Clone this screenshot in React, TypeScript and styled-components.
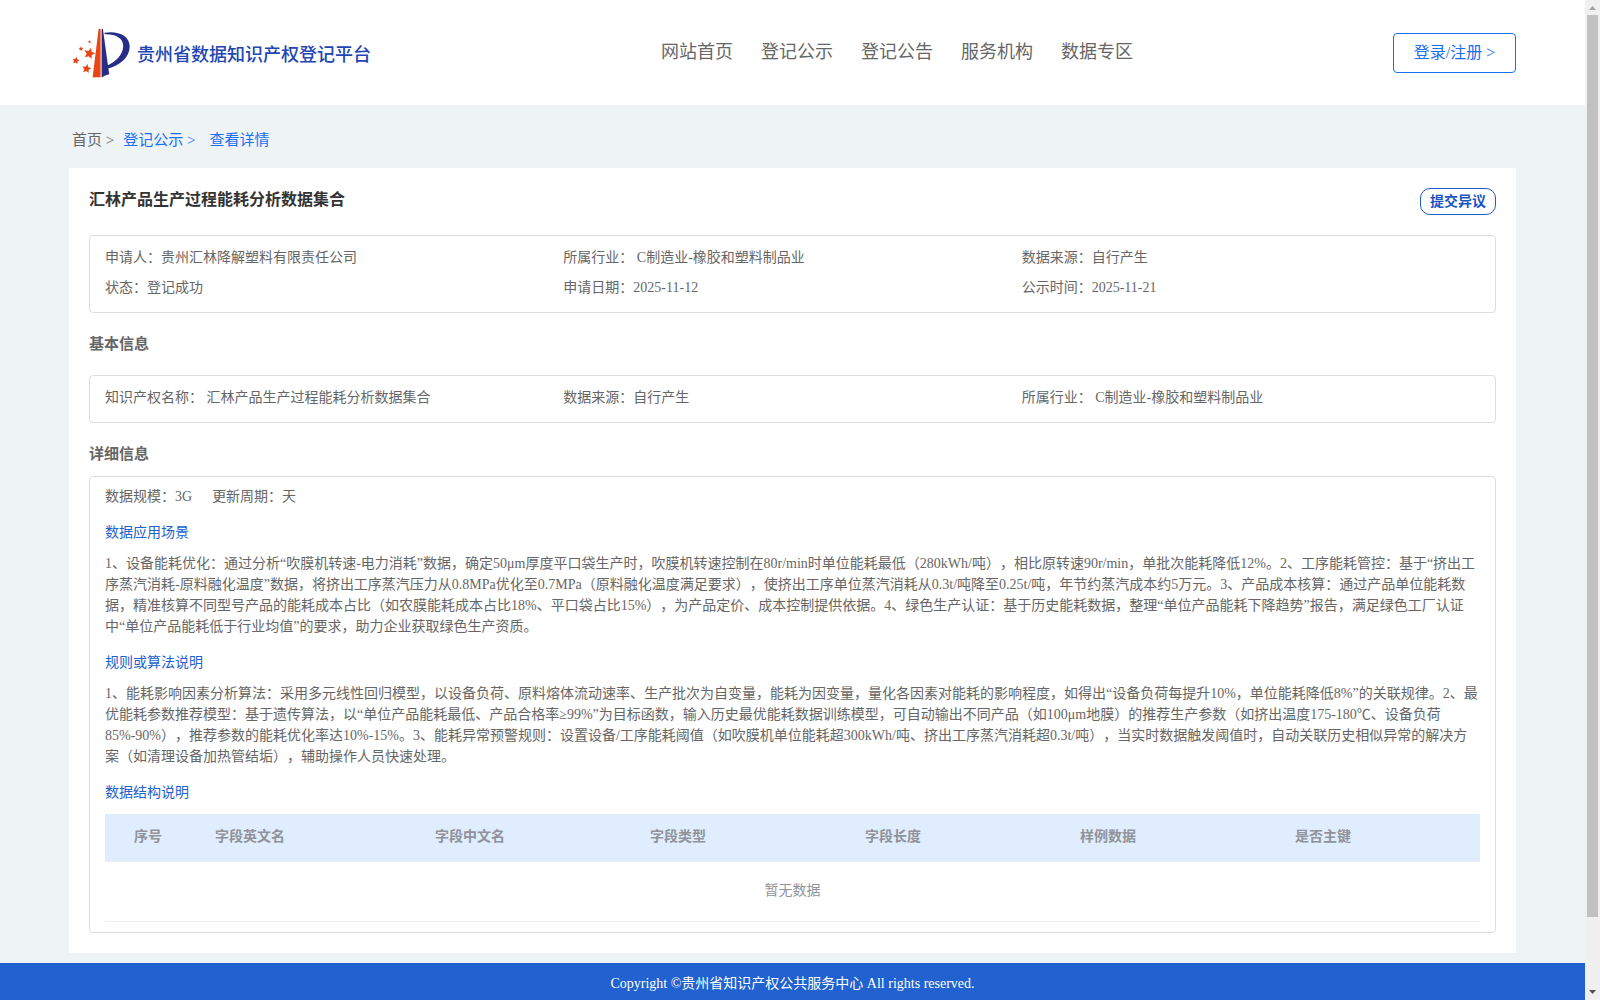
import React from "react";
import styled, { createGlobalStyle } from "styled-components";

const GlobalStyle = createGlobalStyle`
  * { box-sizing: border-box; }
  body {
    margin: 0;
    background: #eef3f6;
    font-family: "Liberation Serif", "Noto Sans CJK SC", serif;
    font-size: 14px;
    color: #666;
    text-spacing-trim: space-all;
  }
`;

const Window = styled.div`
  display: flex;
  width: 1600px;
  height: 1000px;
  overflow: hidden;
`;

const Page = styled.div`
  display: flex;
  flex-direction: column;
  width: 1585px;
  height: 1000px;
  background: #eef3f6;
`;

const Header = styled.header`
  display: flex;
  align-items: flex-start;
  height: 105px;
  padding: 0 69px;
  background: #fff;
`;

const Brand = styled.div`
  display: flex;
  align-items: center;
  width: 592px;
  height: 107px;
`;

const BrandName = styled.span`
  margin-left: 4px;
  padding-top: 2px;
  color: #2146b4;
  font-size: 18px;
  font-weight: 500;
  line-height: 24px;
  white-space: nowrap;
`;

const Nav = styled.nav`
  display: flex;
  gap: 28px;
  margin-top: 40px;
`;

const NavItem = styled.a`
  color: #666;
  font-size: 18px;
  line-height: 24px;
  white-space: nowrap;
`;

const LoginButton = styled.button`
  width: 123px;
  height: 40px;
  margin: 33px 0 0 auto;
  padding: 0;
  border: 1px solid #1a6ff0;
  border-radius: 4px;
  background: #fff;
  color: #1a6ff0;
  font-family: inherit;
  font-size: 16px;
  line-height: 36px;
  white-space: nowrap;
`;

const Breadcrumb = styled.div`
  display: flex;
  height: 63px;
  padding: 24px 0 0 72px;
  font-size: 15px;
  line-height: 22px;
`;

const Crumb = styled.span<{ $active?: boolean; $gap?: number }>`
  margin-right: ${(p) => p.$gap ?? 0}px;
  color: ${(p) => (p.$active ? "#1a6ff5" : "#666")};
  white-space: pre;
`;

const Card = styled.main`
  display: flex;
  flex-direction: column;
  width: 1447px;
  height: 785px;
  margin-left: 69px;
  padding: 20px;
  background: #fff;
`;

const TitleRow = styled.div`
  display: flex;
  justify-content: space-between;
  height: 47px;
`;

const Title = styled.h1`
  margin: 0;
  padding-top: 1px;
  color: #333;
  font-size: 16px;
  font-weight: 700;
  line-height: 22px;
`;

const ObjectionButton = styled.button`
  width: 76px;
  height: 27px;
  padding: 0;
  border: 1px solid #1f5cc8;
  border-radius: 10px;
  background: #fff;
  color: #1a55c4;
  font-family: inherit;
  font-size: 14px;
  font-weight: 700;
  line-height: 23px;
`;

const Box = styled.section<{ $height: number; $top?: number }>`
  height: ${(p) => p.$height}px;
  padding: ${(p) => p.$top ?? 7}px 15px 0;
  border: 1px solid #ddd;
  border-radius: 4px;
`;

const InfoGrid = styled.div`
  display: grid;
  grid-template-columns: repeat(3, 1fr);
  line-height: 30px;
`;

const Cell = styled.div`
  white-space: pre;
`;

const SectionTitle = styled.h2<{ $height: number; $top: number }>`
  height: ${(p) => p.$height}px;
  margin: 0;
  padding-top: ${(p) => p.$top}px;
  color: #666;
  font-size: 15px;
  font-weight: 700;
  line-height: 20px;
`;

const Meta = styled.div`
  display: flex;
  gap: 20px;
  height: 20px;
  line-height: 20px;
`;

const SubTitle = styled.h3<{ $gap?: number }>`
  margin: 16px 0 ${(p) => p.$gap ?? 10}px;
  color: #2161d0;
  font-size: 14px;
  font-weight: 400;
  line-height: 20px;
`;

const Paragraph = styled.p`
  margin: 0;
  line-height: 21px;
`;

const Line = styled.span`
  display: block;
  white-space: nowrap;
`;

const TableHead = styled.div`
  display: grid;
  grid-template-columns: 81px 220px repeat(4, 215px) 185px;
  width: 1375px;
  height: 48px;
  padding-left: 29px;
  border-bottom: 1px solid #ebeef5;
  background: #e0edfe;
  color: #909399;
  font-weight: 700;
  line-height: 45px;
`;

const Empty = styled.div`
  height: 60px;
  width: 1375px;
  border-bottom: 1px solid #ebeef0;
  color: #909399;
  line-height: 57px;
  text-align: center;
`;

const Footer = styled.footer`
  height: 37px;
  margin-top: 10px;
  background: #2161d0;
  color: #fff;
  line-height: 42px;
  text-align: center;
`;

const ScrollTrack = styled.div`
  display: flex;
  flex-direction: column;
  align-items: center;
  width: 15px;
  height: 1000px;
  background: #f0f0f0;
`;

const ScrollThumb = styled.div`
  width: 11px;
  height: 902px;
  background: #c1c1c1;
`;

const ScrollArrow = styled.svg<{ $bottom?: boolean }>`
  display: block;
  margin-top: ${(p) => (p.$bottom ? "auto" : "0")};
`;

const navItems = ["网站首页", "登记公示", "登记公告", "服务机构", "数据专区"];

const columns = ["序号", "字段英文名", "字段中文名", "字段类型", "字段长度", "样例数据", "是否主键"];

const summary = [
  "申请人：贵州汇林降解塑料有限责任公司",
  "所属行业： C制造业-橡胶和塑料制品业",
  "数据来源：自行产生",
  "状态：登记成功",
  "申请日期：2025-11-12",
  "公示时间：2025-11-21",
];

const basics = [
  "知识产权名称： 汇林产品生产过程能耗分析数据集合",
  "数据来源：自行产生",
  "所属行业： C制造业-橡胶和塑料制品业",
];

const scenario = [
  "1、设备能耗优化：通过分析“吹膜机转速-电力消耗”数据，确定50μm厚度平口袋生产时，吹膜机转速控制在80r/min时单位能耗最低（280kWh/吨），相比原转速90r/min，单批次能耗降低12%。2、工序能耗管控：基于“挤出工",
  "序蒸汽消耗-原料融化温度”数据，将挤出工序蒸汽压力从0.8MPa优化至0.7MPa（原料融化温度满足要求），使挤出工序单位蒸汽消耗从0.3t/吨降至0.25t/吨，年节约蒸汽成本约5万元。3、产品成本核算：通过产品单位能耗数",
  "据，精准核算不同型号产品的能耗成本占比（如农膜能耗成本占比18%、平口袋占比15%），为产品定价、成本控制提供依据。4、绿色生产认证：基于历史能耗数据，整理“单位产品能耗下降趋势”报告，满足绿色工厂认证",
  "中“单位产品能耗低于行业均值”的要求，助力企业获取绿色生产资质。",
];

const algorithm = [
  "1、能耗影响因素分析算法：采用多元线性回归模型，以设备负荷、原料熔体流动速率、生产批次为自变量，能耗为因变量，量化各因素对能耗的影响程度，如得出“设备负荷每提升10%，单位能耗降低8%”的关联规律。2、最",
  "优能耗参数推荐模型：基于遗传算法，以“单位产品能耗最低、产品合格率≥99%”为目标函数，输入历史最优能耗数据训练模型，可自动输出不同产品（如100μm地膜）的推荐生产参数（如挤出温度175-180℃、设备负荷",
  "85%-90%），推荐参数的能耗优化率达10%-15%。3、能耗异常预警规则：设置设备/工序能耗阈值（如吹膜机单位能耗超300kWh/吨、挤出工序蒸汽消耗超0.3t/吨），当实时数据触发阈值时，自动关联历史相似异常的解决方",
  "案（如清理设备加热管结垢），辅助操作人员快速处理。",
];

const star = (cx: number, cy: number, r: number, turn: number) =>
  Array.from({ length: 10 }, (_, i) => {
    const radius = i % 2 ? r * 0.48 : r;
    const a = ((i * 36 - 90 + turn) * Math.PI) / 180;
    return `${(cx + radius * Math.cos(a)).toFixed(2)},${(cy + radius * Math.sin(a)).toFixed(2)}`;
  }).join(" ");

const Logo = () => (
  <svg width="64" height="54" viewBox="0 0 64 54">
    <g fill="#e84517">
      <path d="M29.6 2 L31.6 2 L31.6 50.3 Q27 50 23.6 50.6 Z" />
      <polygon points={star(20.4, 26.5, 5.8, 15)} />
      <polygon points={star(17.6, 41.8, 4.8, 10)} />
      <polygon points={star(6.8, 33.6, 3.8, 10)} />
      <polygon points={star(12, 21.8, 2.4, 0)} />
      <polygon points={star(20.6, 14.8, 1.7, 0)} />
    </g>
    <g fill="#272c86">
      <path d="M32.6 2 L33.9 2 L40.2 47.2 Q36 48.3 32.6 50.4 Z" />
      <path d="M35.6 5.8 C48 3.6 60.7 8 60.7 19.5 C60.7 31 50 38.5 39 41.5 L38.5 38.5 C47 34.5 54.2 27.5 54.2 19 C54.2 10.5 46 6.8 35.6 7.2 Z" />
    </g>
  </svg>
);

const TextBlock = ({ lines }: { lines: string[] }) => (
  <Paragraph>
    {lines.map((line) => (
      <Line key={line}>{line}</Line>
    ))}
  </Paragraph>
);

export default function App() {
  return (
    <Window>
      <GlobalStyle />
      <Page>
        <Header>
          <Brand>
            <Logo />
            <BrandName>贵州省数据知识产权登记平台</BrandName>
          </Brand>
          <Nav>
            {navItems.map((item) => (
              <NavItem key={item}>{item}</NavItem>
            ))}
          </Nav>
          <LoginButton>登录/注册 &gt;</LoginButton>
        </Header>
        <Breadcrumb>
          <Crumb $gap={9}>{"首页 >"}</Crumb>
          <Crumb $active $gap={14}>{"登记公示 >"}</Crumb>
          <Crumb $active>查看详情</Crumb>
        </Breadcrumb>
        <Card>
          <TitleRow>
            <Title>汇林产品生产过程能耗分析数据集合</Title>
            <ObjectionButton>提交异议</ObjectionButton>
          </TitleRow>
          <Box $height={78}>
            <InfoGrid>
              {summary.map((text) => (
                <Cell key={text}>{text}</Cell>
              ))}
            </InfoGrid>
          </Box>
          <SectionTitle $height={62} $top={21}>基本信息</SectionTitle>
          <Box $height={48}>
            <InfoGrid>
              {basics.map((text) => (
                <Cell key={text}>{text}</Cell>
              ))}
            </InfoGrid>
          </Box>
          <SectionTitle $height={53} $top={21}>详细信息</SectionTitle>
          <Box $height={457} $top={10}>
            <Meta>
              <span>数据规模：3G</span>
              <span>更新周期：天</span>
            </Meta>
            <SubTitle>数据应用场景</SubTitle>
            <TextBlock lines={scenario} />
            <SubTitle>规则或算法说明</SubTitle>
            <TextBlock lines={algorithm} />
            <SubTitle $gap={11}>数据结构说明</SubTitle>
            <TableHead>
              {columns.map((name) => (
                <span key={name}>{name}</span>
              ))}
            </TableHead>
            <Empty>暂无数据</Empty>
          </Box>
        </Card>
        <Footer>Copyright ©贵州省知识产权公共服务中心 All rights reserved.</Footer>
      </Page>
      <ScrollTrack>
        <ScrollArrow width="15" height="15" viewBox="0 0 15 15">
          <path d="M4 10 L7.5 6 L11 10 Z" fill="#a3a3a3" />
        </ScrollArrow>
        <ScrollThumb />
        <ScrollArrow $bottom width="15" height="15" viewBox="0 0 15 15">
          <path d="M4 5 L7.5 9 L11 5 Z" fill="#505050" />
        </ScrollArrow>
      </ScrollTrack>
    </Window>
  );
}
